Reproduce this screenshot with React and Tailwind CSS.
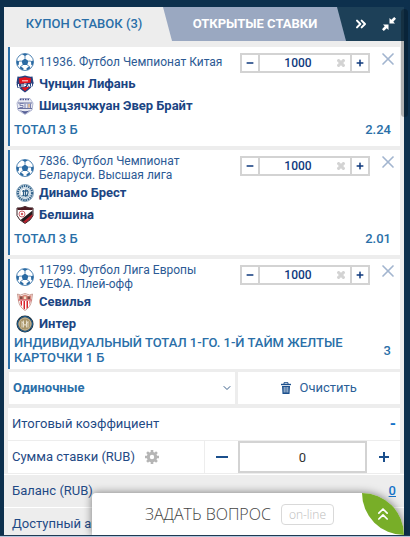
import { useState } from 'react'
import { FaTimes, FaMinus, FaPlus } from 'react-icons/fa'
import { ChevronDown, ChevronsRight, ChevronsUp, X } from 'lucide-react'

function Ball() {
  return (
    <svg viewBox="0 0 36 36" className="size-[18px] shrink-0" fill="#2a6aa3">
      <circle cx="18" cy="18" r="17" fill="#fff" stroke="#2a6aa3" strokeWidth="1.6" />
      <path d="M18 11l7 5-2.700 8h-8.600L11 16z" />
      <path d="M12 2.500l6 3.500 6-3.500a17 17 0 0 0-12 0zM1.500 15l4.500 1.500-.5 7-2.500 2a17 17 0 0 1-1.500-10.500zM34.500 15L30 16.500l.5 7 2.500 2a17 17 0 0 0 1.500-10.500zM7.500 30.500l1.500-4 6 4-.5 4a17 17 0 0 1-7-4zM28.500 30.500l-1.500-4-6 4 .5 4a17 17 0 0 0 7-4z" />
      <path
        d="M18 5v6M25 16l5.500.5M22.300 24l4.700 3M13.700 24L9 27M11 16l-5.500.5"
        fill="none"
        stroke="#2a6aa3"
        strokeWidth="1.500"
      />
    </svg>
  )
}

function LifanCrest() {
  return (
    <svg viewBox="0 0 36 36" className="size-[18px] shrink-0">
      <path d="M3 3Q10 4 18 1q8 3 15 2l2 13q-2 9-17 19Q3 25 1 16z" fill="#26417f" />
      <path d="M6 6q7 0 12-2 5 2 12 2l-1 14q-4 7-11 12Q11 27 7 20z" fill="#e3151f" />
      <path d="M12 10h12v3H12z" fill="#f6a4a4" />
      <path d="M1 18l34-3-2 8-30 3z" fill="#26417f" />
      <path d="M5 18v6h4M12 18v6M16 24v-6h5M16 21h4M23 24l3-6 2 6M31 23v-6" fill="none" stroke="#fff" strokeWidth="2" />
    </svg>
  )
}

function EverBrightCrest() {
  return (
    <svg viewBox="0 0 36 36" className="size-[18px] shrink-0">
      <path d="M8 3h20l6 9-2 14-14 9L4 26 2 12z" fill="#e9eaf2" stroke="#9aa0c4" strokeWidth="1.500" />
      <path d="M8 5h20" stroke="#47518f" strokeWidth="3" strokeDasharray="3 2" />
      <path d="M4 12h28M4 23h28" stroke="#68709f" strokeWidth="2" />
      <path d="M15 13H8v4h6v4H7M18 13v9M24 13v9M29 13v9" fill="none" stroke="#7a80ad" strokeWidth="2" />
      <path d="M24 14h4v7h-4z" fill="#d9b99a" />
      <path d="M7 26q11 5 22 0l-11 8z" fill="#535c94" />
    </svg>
  )
}

function BrestCrest() {
  return (
    <svg viewBox="0 0 36 36" className="size-[18px] shrink-0">
      <circle cx="18" cy="18" r="17" fill="#e4edf3" stroke="#5e86a4" strokeWidth="1.500" />
      <circle cx="18" cy="18" r="14" fill="none" stroke="#2e5f88" strokeWidth="4" strokeDasharray="3 1.500" />
      <circle cx="18" cy="18" r="10" fill="#fff" stroke="#7d9fb8" />
      <path d="M12 13h12v3H12zM11 22h14v3H11z" fill="#7395af" />
      <path d="M15 12v12M19 12h2q4 1 3 6-1 6-5 6z" fill="none" stroke="#2e5f88" strokeWidth="2.500" />
    </svg>
  )
}

function BelshinaCrest() {
  return (
    <svg viewBox="0 0 36 36" className="size-[18px] shrink-0">
      <path d="M2 4q8 1 16-3 8 4 16 3v15q-3 9-16 16Q5 28 2 19z" fill="#fff" stroke="#3a2226" strokeWidth="2" />
      <path d="M3 4q8 1 15-3 8 4 15 3v4H3z" fill="#4c1c24" />
      <path d="M33 9v10q-3 8-15 15-5-3-9-6z" fill="#241a1c" />
      <path d="M33 16L14 32l5 2 13-12z" fill="#b7202e" />
      <circle cx="12" cy="16" r="6" fill="#fff" stroke="#c9666d" strokeWidth="2" />
      <circle cx="12" cy="16" r="2.500" fill="#d25a60" />
    </svg>
  )
}

function SevillaCrest() {
  return (
    <svg viewBox="0 0 36 36" className="size-[18px] shrink-0">
      <path d="M3 2l6 2 9-3 9 3 6-2-2 14q-2 12-13 19Q7 28 5 16z" fill="#fff" stroke="#b98276" strokeWidth="1.500" />
      <path d="M5 4l6 2 7-3 7 3 6-2-1 9H6z" fill="#d8877a" />
      <path d="M8 7h5v5H8zM23 7h5v5h-5z" fill="#7d5047" />
      <path d="M16 7h4v5h-4z" fill="#f1e3c8" />
      <path d="M9 16h3v11l-3-5zM15 16h3v17l-3-2zM21 16h3v13l-3 3zM27 16h2l-2 8z" fill="#d8232a" />
      <path d="M5 14h26" stroke="#c3272d" strokeWidth="2" />
    </svg>
  )
}

function InterCrest() {
  return (
    <svg viewBox="0 0 36 36" className="size-[18px] shrink-0">
      <circle cx="18" cy="18" r="17" fill="#1b1f25" />
      <circle cx="18" cy="18" r="15" fill="none" stroke="#1c6396" strokeWidth="2" />
      <circle cx="18" cy="18" r="12.500" fill="#a89468" stroke="#e7dfc6" strokeWidth="1.500" />
      <path d="M12 25V13l6 8 6-8v12M15 11v14M21 11v14" fill="none" stroke="#f3efe2" strokeWidth="1.500" />
    </svg>
  )
}

function CompressIcon() {
  return (
    <svg viewBox="0 0 14 14" className="size-3.5" fill="currentColor">
      <path d="M7.500 1v5.500H13L11.300 4.800 14 1.800 12.200 0 9.300 2.800z" />
      <path d="M6.500 13V7.500H1l1.700 1.700L0 12.200 1.800 14l2.900-2.800z" />
    </svg>
  )
}

function GearIcon() {
  return (
    <svg viewBox="0 0 14 14" className="size-3.5" fill="none" stroke="currentColor">
      <circle cx="7" cy="7" r="3.700" strokeWidth="3" />
      <path
        d="M7 0v2.500M7 11.500V14M0 7h2.500M11.500 7H14M2.050 2.050l1.800 1.800M10.150 10.150l1.800 1.800M2.050 11.950l1.800-1.800M10.150 3.850l1.800-1.800"
        strokeWidth="2.600"
      />
    </svg>
  )
}

function TrashIcon() {
  return (
    <svg viewBox="0 0 10 12" className="h-3 w-2.5" fill="none" stroke="currentColor">
      <path d="M0 2.500h10" strokeWidth="1.400" />
      <path d="M3 2V.7h4V2" />
      <path d="M1 4h8l-.5 8h-7z" fill="currentColor" stroke="none" />
      <path d="M3.200 5v5.500M5 5v5.500M6.800 5v5.500" stroke="#fff" strokeWidth=".7" />
    </svg>
  )
}

const bets = [
  {
    id: '11936',
    title: 'Футбол Чемпионат Китая',
    teams: [
      { name: 'Чунцин Лифань', Crest: LifanCrest },
      { name: 'Шицзячжуан Эвер Брайт', Crest: EverBrightCrest },
    ],
    market: 'ТОТАЛ 3 Б',
    odds: '2.24',
  },
  {
    id: '7836',
    title: 'Футбол Чемпионат Беларуси. Высшая лига',
    teams: [
      { name: 'Динамо Брест', Crest: BrestCrest },
      { name: 'Белшина', Crest: BelshinaCrest },
    ],
    market: 'ТОТАЛ 3 Б',
    odds: '2.01',
  },
  {
    id: '11799',
    title: 'Футбол Лига Европы УЕФА. Плей-офф',
    teams: [
      { name: 'Севилья', Crest: SevillaCrest },
      { name: 'Интер', Crest: InterCrest },
    ],
    market: 'ИНДИВИДУАЛЬНЫЙ ТОТАЛ 1-ГО. 1-Й ТАЙМ ЖЕЛТЫЕ КАРТОЧКИ 1 Б',
    odds: '3',
  },
]

function Stepper({ label }) {
  const [value, setValue] = useState('1000')
  const step = (d) => setValue(String(Math.max(0, Number(value) + d)))

  return (
    <div className="mt-0.5 flex h-5 w-[130px] shrink-0 border-2 border-[#d3d3d3] text-[#0f3a7d]">
      <button type="button" aria-label="Меньше" className="grid w-4 place-items-center" onClick={() => step(-100)}>
        <FaMinus className="size-2" />
      </button>
      <div className="flex min-w-0 flex-1 items-center border-x-2 border-[#d3d3d3]">
        <input
          aria-label={label}
          className="w-full min-w-0 flex-1 text-center text-xs font-medium outline-none"
          value={value}
          onChange={(e) => setValue(e.target.value)}
        />
        <button type="button" aria-label="Стереть" className="mr-1 text-[#d3d3d3]" onClick={() => setValue('')}>
          <FaTimes className="size-2.5 stroke-current stroke-[60]" />
        </button>
      </div>
      <button type="button" aria-label="Больше" className="grid w-4 place-items-center" onClick={() => step(100)}>
        <FaPlus className="size-2" />
      </button>
    </div>
  )
}

function BetCard({ bet }) {
  return (
    <article className="border-l-2 border-[#2a6fa8] bg-white pt-1">
      <div className="flex items-start pr-0.5 pl-1.5">
        <div className="flex min-h-[22px] min-w-0 flex-1 items-center gap-[5px]">
          <Ball />
          <h2 className="max-w-[190px] text-xs leading-[14px] text-[#2c5a94]">
            {bet.id}. {bet.title}
          </h2>
        </div>
        <Stepper label={`Сумма ${bet.id}`} />
        <button type="button" aria-label="Удалить" className="-mt-0.5 ml-2 text-[#a2b5cf]">
          <X className="size-5" strokeWidth={2} />
        </button>
      </div>
      <ul className="pl-1.5">
        {bet.teams.map(({ name, Crest }) => (
          <li key={name} className="flex h-[22px] items-center gap-[5px] text-[13px] font-bold text-[#1b4583]">
            <Crest />
            {name}
          </li>
        ))}
      </ul>
      <div className="mb-1 flex min-h-[25px] items-center justify-between pr-[9px] pl-1 text-[13px] leading-[15px] font-medium text-[#2a6fa8]">
        <span className="max-w-[350px]">{bet.market}</span>
        <span>{bet.odds}</span>
      </div>
    </article>
  )
}

export default function App() {
  const [sum, setSum] = useState('0')

  return (
    <div className="relative h-screen overflow-hidden bg-[#0d304d] pt-[7px] pr-1.5 pl-1 font-[Roboto,sans-serif]">
      <main className="bg-[#ededed]">
        <nav className="flex h-[34px] bg-[#1d4058] text-[13px] font-medium">
          <button
            type="button"
            className="relative z-10 w-[42%] bg-[#ededed] pr-2 text-[#2a6fa8] [clip-path:polygon(0_0,calc(100%-9px)_0,100%_100%,0_100%)]"
          >
            КУПОН СТАВОК (3)
          </button>
          <button
            type="button"
            className="-ml-2.5 flex-1 bg-[#9aa8c1] pl-0.5 font-bold text-white [clip-path:polygon(0_0,calc(100%-9px)_0,100%_100%,0_100%)]"
          >
            ОТКРЫТЫЕ СТАВКИ
          </button>
          <div className="flex w-[58px] items-center justify-between pr-2 pl-[7px] text-white">
            <button type="button" aria-label="Вперёд">
              <ChevronsRight className="size-4" strokeWidth={3} />
            </button>
            <button type="button" aria-label="Свернуть">
              <CompressIcon />
            </button>
          </div>
        </nav>

        <div className="px-1 pt-1.5">
          <section className="flex flex-col gap-1">
            {bets.map((bet) => (
              <BetCard key={bet.id} bet={bet} />
            ))}
          </section>

          <div className="mt-[3px] flex h-8 gap-[3px] pl-px text-[13px]">
            <div className="relative flex-[7] bg-white">
              <select
                aria-label="Тип ставки"
                className="h-full w-full appearance-none px-1 font-bold text-[#2a6fa8] outline-none"
              >
                <option>Одиночные</option>
                <option>Экспресс</option>
              </select>
              <ChevronDown className="pointer-events-none absolute top-2.5 right-0.5 size-3 text-[#3a5f8a]" />
            </div>
            <button type="button" className="flex flex-[5] items-center justify-center gap-2 bg-white text-[#2c5f98]">
              <span className="text-[#1b4f8c]">
                <TrashIcon />
              </span>
              Очистить
            </button>
          </div>

          <div className="mt-1 flex h-8 items-center justify-between bg-white pr-1 pl-1 text-[13px] text-[#1f4a85]">
            <span>Итоговый коэффициент</span>
            <span className="text-base font-bold text-[#1673c8]">-</span>
          </div>

          <div className="mt-px flex h-8 items-center bg-white text-[13px] text-[#1f4a85]">
            <label htmlFor="sum" className="pl-1">
              Сумма ставки (RUB)
            </label>
            <button type="button" aria-label="Настройки" className="ml-2.5 text-[#b5b5b5]">
              <GearIcon />
            </button>
            <button
              type="button"
              aria-label="Уменьшить сумму"
              className="ml-auto grid h-full w-[34px] place-items-center border-l border-[#ededed] text-[#1b4f8c]"
              onClick={() => setSum(String(Math.max(0, Number(sum) - 1)))}
            >
              <svg viewBox="0 0 12 12" className="size-3" stroke="currentColor" strokeWidth="2">
                <path d="M0 6h12" />
              </svg>
            </button>
            <input
              id="sum"
              className="h-full w-[129px] border-2 border-[#d3d3d3] text-center text-[#333] outline-none"
              value={sum}
              onChange={(e) => setSum(e.target.value)}
            />
            <button
              type="button"
              aria-label="Увеличить сумму"
              className="grid h-full w-[33px] place-items-center text-[#1b4f8c]"
              onClick={() => setSum(String(Number(sum) + 1))}
            >
              <svg viewBox="0 0 12 12" className="size-3" stroke="currentColor" strokeWidth="2">
                <path d="M1 6h10M6 1v10" />
              </svg>
            </button>
          </div>
        </div>

        <div className="mt-px text-[13px] text-[#1f4a85]">
          <div className="flex h-[33px] items-center justify-between border-t border-white px-2">
            <span>Баланс (RUB)</span>
            <a href="#balance" className="font-medium text-[#1673c8] underline">
              0
            </a>
          </div>
          <div className="flex h-[33px] items-center border-t border-white px-2">Доступный аванс</div>
        </div>
      </main>

      {/* полоса прокрутки */}
      <div className="absolute top-[9px] right-0.5 h-[108px] w-[7px] rounded-full bg-black/25" />

      <button
        type="button"
        className="absolute right-1.5 bottom-0.5 z-10 flex h-[42px] w-[312px] items-center rounded-tl-sm rounded-tr-[42px] bg-white pl-[53px] font-['Open_Sans',sans-serif] shadow-[0_0_8px_rgba(0,0,0,0.5)]"
      >
        <span className="text-base font-light text-[#444]">ЗАДАТЬ ВОПРОС</span>
        <span className="ml-2.5 rounded border border-[#d9d9d9] px-[7px] text-xs leading-[19px] font-light text-[#bbb]">
          on-line
        </span>
        <span className="ml-auto grid size-[42px] place-items-center rounded-tr-[42px] rounded-bl-[42px] bg-[#78ae28] text-white">
          <ChevronsUp className="size-5" strokeWidth={2} />
        </span>
      </button>
      <div className="absolute inset-x-0 bottom-0 z-10 h-0.5 border-t border-[#1f3a52] bg-[#b3c5dc]" />
    </div>
  )
}
